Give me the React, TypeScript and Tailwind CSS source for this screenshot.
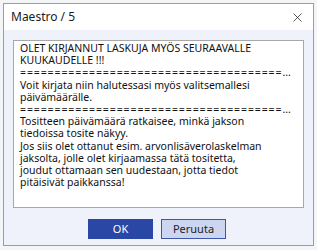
import { X } from "lucide-react"

const lines = [
  "OLET KIRJANNUT LASKUJA MYÖS SEURAAVALLE",
  "KUUKAUDELLE !!!",
  "=",
  "Voit kirjata niin halutessasi myös valitsemallesi",
  "päivämäärälle.",
  "=",
  "Tositteen päivämäärä ratkaisee, minkä jakson",
  "tiedoissa tosite näkyy.",
  "Jos siis olet ottanut esim. arvonlisäverolaskelman",
  "jaksolta, jolle olet kirjaamassa tätä tositetta,",
  "joudut ottamaan sen uudestaan, jotta tiedot",
  "pitäisivät paikkanssa!",
]

const rule = "=".repeat(38)

export default function App() {
  return (
    <div className="w-[317px] h-[250px] bg-[#f4f5f7] pt-[3px] pl-[3px] font-['Noto_Sans',sans-serif]">
      <div className="w-[311px] h-[243px] border border-[#6ea8de] flex flex-col bg-[#eff2fa]">
        {/* title bar */}
        <div className="h-[26px] bg-white flex items-center justify-between pl-[7px] pr-[8px]">
          <span className="text-[12px] text-[#1a1a1a]">Maestro / 5</span>
          <X className="w-[15px] h-[15px] text-[#333]" strokeWidth={1.3} />
        </div>

        {/* message box */}
        <div className="mx-[9px] mt-[10px] h-[168px] bg-white border border-[#a8a8a8] pl-[6px] pt-[1px]">
          {lines.map((l, i) =>
            l === "=" ? (
              <div key={i} className="text-[10.5px] leading-[12.2px] text-[#111] whitespace-nowrap">
                <span className="tracking-[0.9px]">{rule}</span>...
              </div>
            ) : (
              <div key={i} className="text-[10.5px] leading-[12.2px] text-[#111] whitespace-nowrap">
                {l}
              </div>
            )
          )}
        </div>

        {/* buttons */}
        <div className="flex gap-[8px] pl-[84px] mt-[11px]">
          <button className="w-[65px] h-[20px] bg-[#2b47a6] text-white text-[11px]">OK</button>
          <button className="w-[65px] h-[20px] bg-[#cdd6f1] border border-[#3f57aa] text-[#222] text-[11px]">
            Peruuta
          </button>
        </div>
      </div>
    </div>
  )
}
